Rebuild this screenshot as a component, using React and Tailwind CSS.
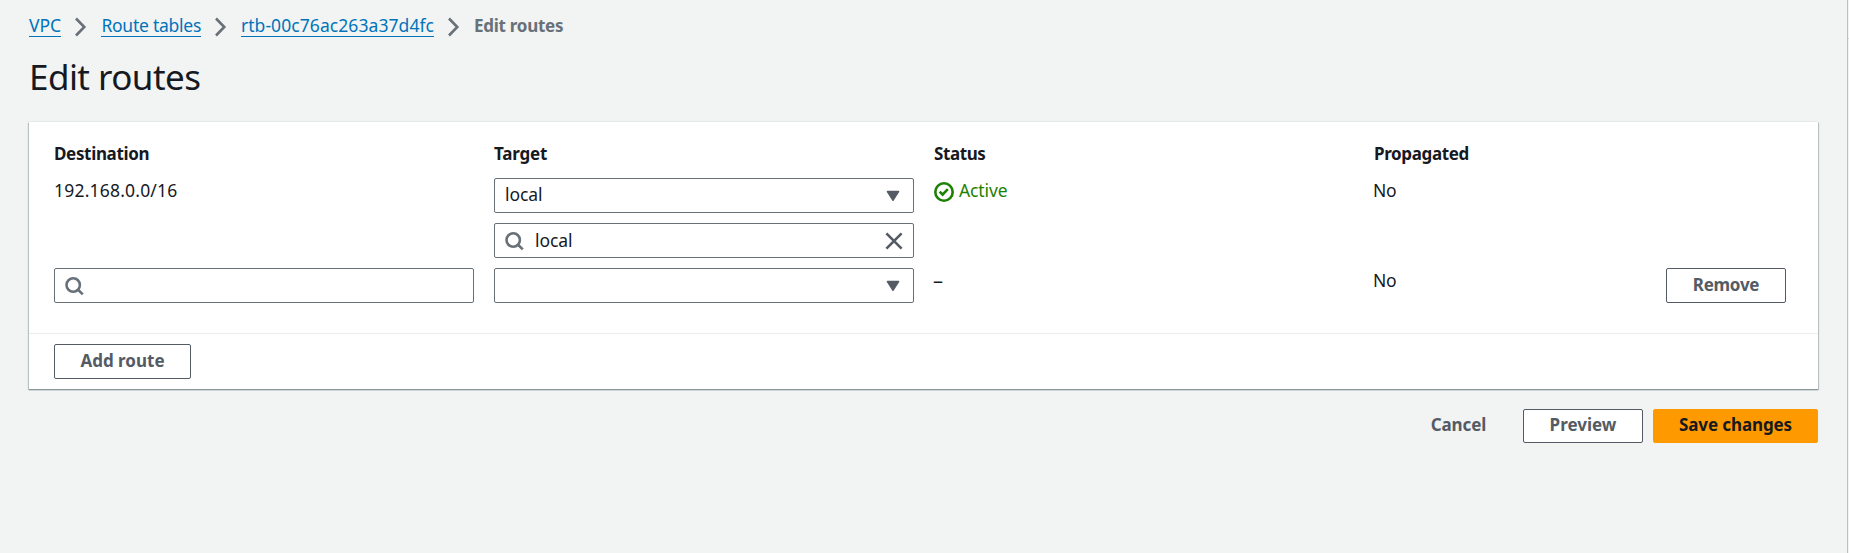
function Chevron() {
  return (
    <svg className="ml-[13px] mr-[14px] mt-[4px] h-[20px] w-[13px] shrink-0" viewBox="0 0 13 20" fill="none" stroke="#687078" strokeWidth="2.6">
      <path d="M2 1.5 10.3 10 2 18.5" />
    </svg>
  );
}

function SearchIcon() {
  return (
    <svg className="h-5 w-5 shrink-0" viewBox="0 0 20 20" fill="none" stroke="#687078" strokeWidth="2.6">
      <circle cx="9.2" cy="9" r="6.7" />
      <path d="m13.8 13.5 5 4.9" />
    </svg>
  );
}

function Caret() {
  return (
    <svg className="mt-px h-[12px] w-[14px] shrink-0" viewBox="0 0 14 12" fill="#545b64" stroke="#545b64" strokeWidth="1.4" strokeLinejoin="round">
      <path d="M1.4 1.5h11.2L7 10.3z" />
    </svg>
  );
}

function Select({ children }) {
  return (
    <div className="flex h-[35px] items-center justify-between rounded-[2px] border border-[#687078] bg-white pl-[10px] pr-[13px]">
      <span className="pb-[3px] leading-6 tracking-[-0.1px]">{children}</span>
      <Caret />
    </div>
  );
}

function SearchInput({ value }) {
  return (
    <div className="flex h-[35px] items-center rounded-[2px] border border-[#687078] bg-white pl-[9px] pr-[10px]">
      <SearchIcon />
      {value && (
        <>
          <span className="ml-[11px] flex-1 pb-[2px] leading-6 tracking-[-0.1px]">{value}</span>
          <svg className="h-[18px] w-[18px] shrink-0" viewBox="0 0 18 18" fill="none" stroke="#545b64" strokeWidth="2.6">
            <path d="m1.4 1.4 15.2 15.2M16.6 1.4 1.4 16.6" />
          </svg>
        </>
      )}
    </div>
  );
}

function Button({ className, children }) {
  return (
    <button className={`flex items-center justify-center rounded-[2px] border pb-[2px] text-[17px] font-bold leading-6 whitespace-nowrap ${className}`}>
      {children}
    </button>
  );
}

const link = "box-border block h-6 border-b border-[#0073bb] leading-6 text-[#0073bb] whitespace-nowrap";

export default function App() {
  return (
    <div className="flex h-[553px] w-[1849px] bg-[#f2f3f3] font-['Noto_Sans','Open_Sans',sans-serif] text-[17.5px] text-[#16191f]">
      <main className="w-[1847px] pl-[29px] pr-[29px] pt-[13px]">
        <nav className="flex h-6">
          <a className={`${link} w-[32.4px]`}>VPC</a>
          <Chevron />
          <a className={`${link} w-[99.5px] tracking-[-0.25px]`}>Route tables</a>
          <Chevron />
          <a className={`${link} w-[193px] tracking-[0.07px]`}>rtb-00c76ac263a37d4fc</a>
          <Chevron />
          <span className="text-[17px] font-bold leading-[26px] tracking-[-0.25px] text-[#687078]">Edit routes</span>
        </nav>
        <h1 className="mt-[17px] h-[45px] text-[35px] leading-[45px] tracking-[-0.55px]">Edit routes</h1>
        <section className="mt-[23px] h-[267px] w-[1789px] bg-white shadow-[0_1px_0_0_#8a9698,0_2px_0_0_#d0d5d6,1px_1px_1px_0_rgba(0,28,36,0.2),-1px_1px_1px_0_rgba(0,28,36,0.2),0_0_0_1px_#e6eaea]">
          <div className="grid h-[212px] grid-cols-[420px_420px_420px_412px] grid-rows-[35px_80px_35px] content-start gap-x-5 border-b border-[#eaeded] pl-[25px] pt-[21px] [&>h2]:text-[17px] [&>h2]:font-bold [&>h2]:leading-[21px]">
            <h2 className="tracking-[-0.34px]">Destination</h2>
            <h2 className="tracking-[-0.2px]">Target</h2>
            <h2 className="tracking-[-0.4px]">Status</h2>
            <h2 className="tracking-[-0.36px]">Propagated</h2>

            <div className="leading-[25px] tracking-[0.2px]">192.168.0.0/16</div>
            <div className="flex flex-col gap-[10px]">
              <Select>local</Select>
              <SearchInput value="local" />
            </div>
            <div className="flex h-[25px] items-center text-[#1d8102]">
              <svg className="mt-[2px] h-5 w-5" viewBox="0 0 20 20" fill="none" stroke="currentColor" strokeWidth="2.6">
                <circle cx="10" cy="10" r="8.7" />
                <path d="m5.7 9.7 2.9 3 5.2-5.5" />
              </svg>
              <span className="ml-[5px] leading-[25px] tracking-[-0.12px]">Active</span>
            </div>
            <div className="-ml-px leading-[25px] tracking-[-0.3px]">No</div>

            <div className="mt-[10px] h-[35px]"><SearchInput /></div>
            <div className="mt-[10px] h-[35px]"><Select /></div>
            <div className="-ml-px mt-[10px] text-[20px] leading-[26px]">–</div>
            <div className="-ml-px mt-[10px] flex justify-between">
              <span className="leading-[25px] tracking-[-0.3px]">No</span>
              <Button className="h-[35px] w-[120px] border-[#545b64] bg-white tracking-[-0.25px] text-[#545b64]">Remove</Button>
            </div>
          </div>
          <div className="pl-[25px] pt-[10px]">
            <Button className="h-[35px] w-[137px] border-[#545b64] bg-white text-[#545b64]">Add route</Button>
          </div>
        </section>
        <div className="mt-5 flex justify-end">
          <Button className="mr-[14px] h-[34px] w-[101px] border-transparent tracking-[-0.1px] text-[#545b64]">Cancel</Button>
          <Button className="mr-[10px] h-[34px] w-[120px] border-[#545b64] bg-white text-[#545b64]">Preview</Button>
          <Button className="h-[34px] w-[165px] border-[#ff9900] bg-[#ff9900] tracking-[-0.1px] text-[#16191f]">Save changes</Button>
        </div>
      </main>
      <div className="w-[2px] border-l border-[#b9c1c1]">
        <div className="mt-[38px] h-px bg-[#d5dbdb]" />
      </div>
    </div>
  );
}
